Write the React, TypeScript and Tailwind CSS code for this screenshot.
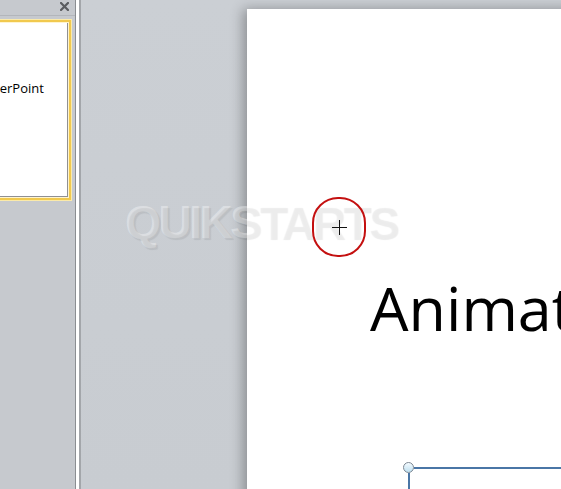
import React from 'react'

const App = () => {
  return (
    <div className="relative flex h-[489px] w-[561px] overflow-hidden bg-[#c9cdd2] font-['Open_Sans',sans-serif]">
      {/* slides pane */}
      <aside className="flex w-[75px] shrink-0 flex-col overflow-hidden bg-[#c6c9ce]">
        <div className="flex h-[16px] shrink-0 items-center justify-end border-b border-[#b3b6bb] pr-[6px]">
          <svg width="9" height="9" viewBox="0 0 9 9" className="mt-[-2px]">
            <path d="M1 1 L8 8 M8 1 L1 8" stroke="#5a5c60" strokeWidth="2.2" strokeLinecap="square" />
          </svg>
        </div>
        <div className="mt-[3px] h-[182px] w-[72px] border border-l-0 border-[#fbeaa9]">
          <div className="h-full w-full border-[2px] border-l-0 border-[#f1c94e]">
            <div className="h-full w-full border border-l-0 border-[#fff4cf]">
              <div className="h-full w-full overflow-hidden border-b border-r border-[#8f9093] bg-white">
                <p className="ml-[-26px] mt-[56px] whitespace-nowrap text-[13px] leading-[18px] text-black">PowerPoint</p>
              </div>
            </div>
          </div>
        </div>
      </aside>

      {/* splitter */}
      <div className="flex w-[6px] shrink-0">
        <div className="w-[1px] bg-[#8b8e92]" />
        <div className="w-[3px] bg-white" />
        <div className="w-[2px] bg-[#a3a6aa]" />
      </div>

      {/* editing area */}
      <main className="flex-1 bg-gradient-to-b from-[#cbcfd4] to-[#c8ccd1] pl-[166px] pt-[9px]">
        <div className="relative h-[500px] w-[340px] bg-white pl-[123px] pt-[268px] shadow-[-4px_0_12px_rgba(0,0,0,0.3)]">
          <h1 className="whitespace-nowrap text-[61px] leading-none font-normal text-black">
            Animat
          </h1>

          {/* connector shape handle */}
          <div className="absolute left-[156px] top-[453px] h-[11px] w-[11px] rounded-full border border-[#7d8894] bg-gradient-to-b from-[#f4fbff] to-[#bfe0f0]" />
          <div className="absolute left-[167px] top-[458px] h-[1.5px] w-[200px] bg-[#4a76a6]" />
          <div className="absolute left-[161px] top-[464px] h-[40px] w-[1.5px] bg-[#4a76a6]" />
        </div>
      </main>

      {/* watermark */}
      <div className="pointer-events-none absolute left-[126px] top-[200px] whitespace-nowrap font-['Liberation_Sans',sans-serif] text-[46px] font-bold leading-none tracking-[-2.5px] text-[rgba(255,255,255,0.06)] [text-shadow:1px_1px_1px_rgba(0,0,0,0.08),-1px_-1px_0_rgba(255,255,255,0.35)]">
        QUIKSTARTS
      </div>

      {/* cursor highlight */}
      <div className="absolute left-[312px] top-[197px] flex h-[60px] w-[54px] items-center justify-center rounded-[26px] border-2 border-[#c41010]">
        <svg width="15" height="15" viewBox="0 0 15 15">
          <path d="M7.5 0 V15 M0 7.5 H15" stroke="#111" strokeWidth="1" />
        </svg>
      </div>
    </div>
  )
}

export default App
